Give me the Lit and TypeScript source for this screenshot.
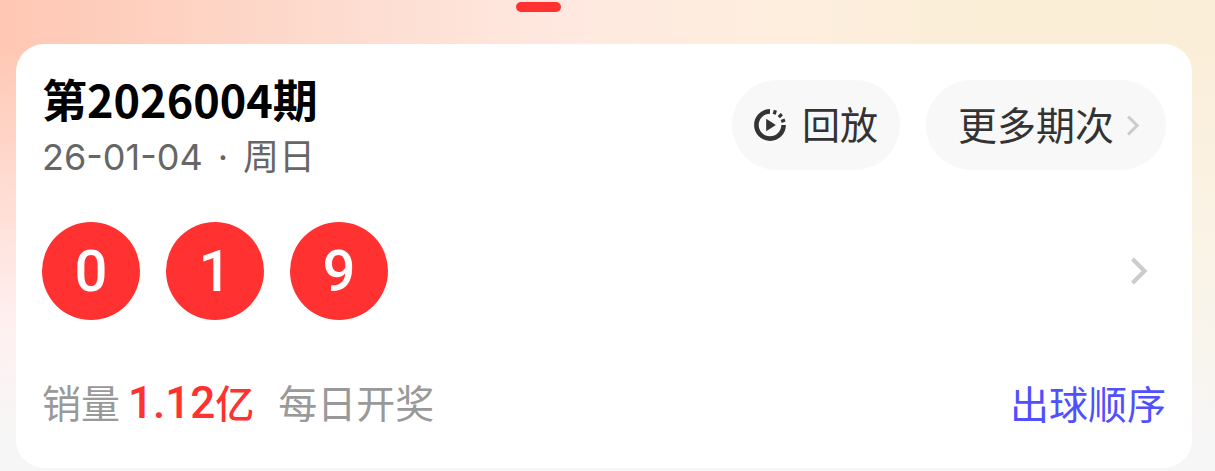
import { LitElement, html, css, svg } from "lit";
import { customElement, property } from "lit/decorators.js";

@customElement("draw-ball")
class DrawBall extends LitElement {
  @property() value = "";

  static styles = css`
    :host {
      display: grid;
      place-items: center;
      width: 98px;
      height: 98px;
      border-radius: 50%;
      background: #ff3131;
      color: #fff;
      font: 500 58px/58px Roboto, sans-serif;
    }
  `;

  render() {
    return html`<span>${this.value}</span>`;
  }
}

const chevron = (cls: string) => html`
  <svg class=${cls} viewBox="0 0 18 28" fill="none" stroke="#ccc" stroke-width="4.2" aria-hidden="true">
    <path d="M2.5 2 L14.5 14 L2.5 26" />
  </svg>
`;

const replayIcon = svg`
  <svg class="replay-icon" viewBox="0 0 32 32" fill="none" stroke="#333" aria-hidden="true">
    <path d="M16 2.4 A13.6 13.6 0 1 0 29.6 16" stroke-width="4.6" />
    <path d="M20.2 5.2 L21.4 1.2 M24.8 8.2 L27.8 5.2 M27.2 12.4 L31 11" stroke-width="3.2" />
    <path d="M12.2 9.8 V22.2 L21.8 16 Z" fill="#333" stroke="none" />
  </svg>
`;

@customElement("app-root")
class AppRoot extends LitElement {
  static styles = css`
    :host {
      display: block;
      box-sizing: border-box;
      min-height: 100vh;
      padding: 2px 23px 3px 16px;
      font-family: "Noto Sans CJK SC", sans-serif;
      background:
        linear-gradient(to bottom, rgba(247, 246, 246, 0) 70%, #f7f6f6 92%),
        linear-gradient(to right, rgba(255, 241, 241, 1), rgba(249, 245, 236, 1)) 0 100% / 100% 30% no-repeat,
        linear-gradient(to bottom, rgba(255, 241, 241, 0) 10%, #fff1f1 70%) 0 0 / 50% 100% no-repeat,
        linear-gradient(to bottom, rgba(249, 245, 236, 0) 10%, #f9f5ec 70%) 100% 0 / 50% 100% no-repeat,
        linear-gradient(to right, #ffc7b3 0%, #fddccf 28%, #ffe8e0 46%, #feeedf 62%, #faeed6 85%, #fbeed9 100%);
    }
    .tab-mark {
      width: 45px;
      height: 10px;
      margin: 0 auto 32px;
      border-radius: 5px;
      background: #ff3131;
      transform: translateX(-66px);
    }
    .card {
      padding: 36px 26px 46px;
      border-radius: 28px;
      background: #fff;
    }
    .head,
    .result,
    .foot {
      display: flex;
      align-items: center;
      justify-content: space-between;
    }
    .head {
      align-items: flex-start;
    }
    h1 {
      margin: 0;
      font-size: 45px;
      line-height: 38px;
      font-weight: 700;
      color: #000;
    }
    time {
      display: flex;
      gap: 15px;
      margin-top: 19px;
      font: 36px/40px Inter, "Noto Sans CJK SC", sans-serif;
      color: #666;
    }
    .actions {
      display: flex;
      gap: 26px;
    }
    button {
      display: flex;
      align-items: center;
      height: 90px;
      padding: 0 22px;
      border: 0;
      border-radius: 45px;
      background: #f8f8f8;
      color: #333;
      font: 38px/40px "Noto Sans CJK SC", sans-serif;
    }
    button span {
      padding-bottom: 4px;
    }
    .replay {
      gap: 16px;
    }
    .replay-icon {
      width: 32px;
      height: 32px;
    }
    .more {
      gap: 12px;
      padding: 0 26px 0 32px;
      font-size: 39px;
    }
    .chevron-small {
      width: 14px;
      height: 21px;
    }
    .result {
      margin-top: 45px;
      padding-right: 18px;
    }
    .balls {
      display: flex;
      gap: 26px;
    }
    .chevron {
      width: 18px;
      height: 28px;
    }
    .foot {
      margin-top: 62px;
      font-size: 39px;
      line-height: 38px;
      color: #999;
    }
    .stats {
      display: flex;
      align-items: baseline;
      gap: 24px;
    }
    .sales,
    .amount {
      display: flex;
      align-items: baseline;
    }
    .sales {
      gap: 8px;
    }
    .amount {
      color: #ff3131;
      font-weight: 500;
    }
    .figure {
      font-family: Roboto, sans-serif;
      font-size: 44px;
    }
    a {
      color: #5050ff;
      text-decoration: none;
    }
  `;

  render() {
    return html`
      <div class="tab-mark"></div>
      <section class="card">
        <div class="head">
          <div>
            <h1>第2026004期</h1>
            <time datetime="2026-01-04"><span>26-01-04</span><span>·</span><span>周日</span></time>
          </div>
          <div class="actions">
            <button class="replay">${replayIcon}<span>回放</span></button>
            <button class="more"><span>更多期次</span>${chevron("chevron-small")}</button>
          </div>
        </div>
        <div class="result">
          <div class="balls">
            ${["0", "1", "9"].map((n) => html`<draw-ball value=${n}></draw-ball>`)}
          </div>
          ${chevron("chevron")}
        </div>
        <div class="foot">
          <div class="stats">
            <span class="sales">销量<span class="amount"><span class="figure">1.12</span>亿</span></span>
            <span>每日开奖</span>
          </div>
          <a href="#order">出球顺序</a>
        </div>
      </section>
    `;
  }
}
